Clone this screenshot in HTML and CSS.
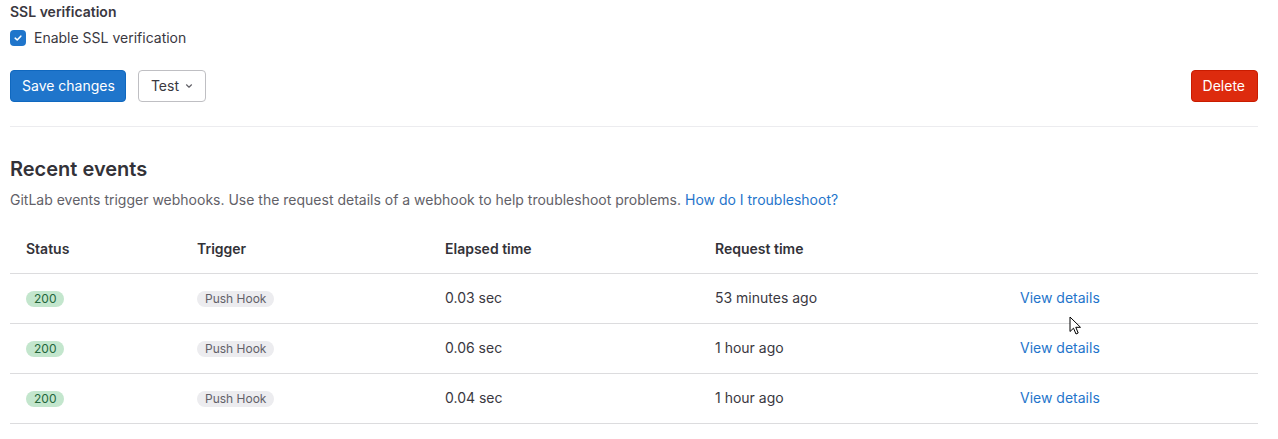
FILE: index.html
```html
<!DOCTYPE html>
<html>
<head>
<meta charset="utf-8">
<link rel="stylesheet" href="styles.css">
</head>
<body>
<div class="page">
  <div class="field">
    <div class="field-label">SSL verification</div>
    <label class="check">
      <span class="box"><svg width="10" height="10" viewBox="0 0 10 10"><path d="M2.2 5.2 L4.2 7 L7.8 3.2" fill="none" stroke="#fff" stroke-width="1.6" stroke-linecap="round" stroke-linejoin="round"/></svg></span>
      <span>Enable SSL verification</span>
    </label>
  </div>
  <div class="actions">
    <div class="left">
      <button class="btn btn-primary">Save changes</button>
      <button class="btn btn-default">Test <svg class="chev" width="10" height="10" viewBox="0 0 10 10"><path d="M2.5 3.8 L5 6.2 L7.5 3.8" fill="none" stroke="#626168" stroke-width="1.2" stroke-linecap="round" stroke-linejoin="round"/></svg></button>
    </div>
    <button class="btn btn-danger">Delete</button>
  </div>
  <hr class="sep">
  <h2 class="title">Recent events</h2>
  <p class="desc">GitLab events trigger webhooks. Use the request details of a webhook to help troubleshoot problems. <a href="#">How do I troubleshoot?</a></p>
  <table class="events">
    <thead>
      <tr><th class="c1">Status</th><th class="c2">Trigger</th><th class="c3">Elapsed time</th><th class="c4">Request time</th><th class="c5"></th></tr>
    </thead>
    <tbody>
      <tr><td><span class="badge ok">200</span></td><td><span class="badge muted">Push Hook</span></td><td>0.03 sec</td><td>53 minutes ago</td><td class="cell-link"><a href="#">View details</a><svg class="cursor" width="13" height="20" viewBox="0 0 13 20"><path d="M1 1 L1 15.5 L4.5 12.2 L7 18 L9.2 17 L6.8 11.3 L11.5 11.3 Z" fill="#fff" stroke="#000" stroke-width="1" stroke-linejoin="round"/></svg></td></tr>
      <tr><td><span class="badge ok">200</span></td><td><span class="badge muted">Push Hook</span></td><td>0.06 sec</td><td>1 hour ago</td><td><a href="#">View details</a></td></tr>
      <tr><td><span class="badge ok">200</span></td><td><span class="badge muted">Push Hook</span></td><td>0.04 sec</td><td>1 hour ago</td><td><a href="#">View details</a></td></tr>
    </tbody>
  </table>
</div>
</body>
</html>
```
FILE: styles.css
```css
* { box-sizing: border-box; }
html, body { margin: 0; padding: 0; background: #fff; }
body {
  font-family: Inter, "Noto Sans", "Liberation Sans", sans-serif;
  font-size: 14px;
  line-height: 20px;
  color: #3a383f;
}
.page { padding: 2px 20px 0 10px; }
.field-label { font-weight: 600; color: #3a383f; height: 20px; }
.check { display: flex; align-items: center; gap: 8px; margin-top: 6px; height: 20px; }
.box {
  width: 16px; height: 16px; border-radius: 4px; background: #1f75cb;
  display: flex; align-items: center; justify-content: center;
}
.box svg { display: block; }
.actions { display: flex; justify-content: space-between; align-items: center; margin-top: 22px; }
.left { display: flex; gap: 12px; }
.btn {
  font-family: inherit; font-size: 14px; line-height: 16px;
  height: 32px; padding: 7px 11px; border-radius: 4px; border: 1px solid; cursor: pointer;
  display: inline-flex; align-items: center;
}
.btn-primary { background: #1f75cb; border-color: #1068bf; color: #fff; padding: 7px 10px 7px 11px; }
.btn-default { background: #fff; border-color: #bfbfc3; color: #3a383f; padding: 7px 11px 7px 12px; }
.chev { margin-left: 5px; }
.btn-danger { background: #dd2b0e; border-color: #c91c00; color: #fff; padding: 7px 12px 7px 11px; }
.sep { border: 0; border-top: 1px solid #ececef; margin: 24px 0 0 0; height: 0; }
.title { font-size: 20px; line-height: 24px; font-weight: 600; margin: 30px 0 0 0; color: #333238; }
.desc { margin: 9px 0 0 0; color: #626168; }
.desc a { color: #1f75cb; text-decoration: none; }
.events { width: 100%; border-collapse: collapse; margin-top: 14px; }
.events th, .events td { text-align: left; padding: 0 16px; }
.events th { font-weight: 600; height: 49px; padding-top: 1px; border-bottom: 1px solid #dcdcde; color: #333238; }
.events td { height: 50px; border-bottom: 1px solid #dcdcde; color: #3a383f; }
.c1 { width: 171px; }
.c2 { width: 248px; }
.c3 { width: 270px; }
.c4 { width: 305px; }
.events a { color: #1f75cb; text-decoration: none; }
.cell-link { position: relative; }
.cursor { position: absolute; left: 65px; top: 42px; }
.badge {
  display: inline-block; font-size: 12px; line-height: 16px; padding: 0 8px;
  border-radius: 8px; vertical-align: middle;
}
.ok { background: #c3e6cd; color: #24663b; }
.muted { background: #ececef; color: #626168; padding: 0 8px; }
```
